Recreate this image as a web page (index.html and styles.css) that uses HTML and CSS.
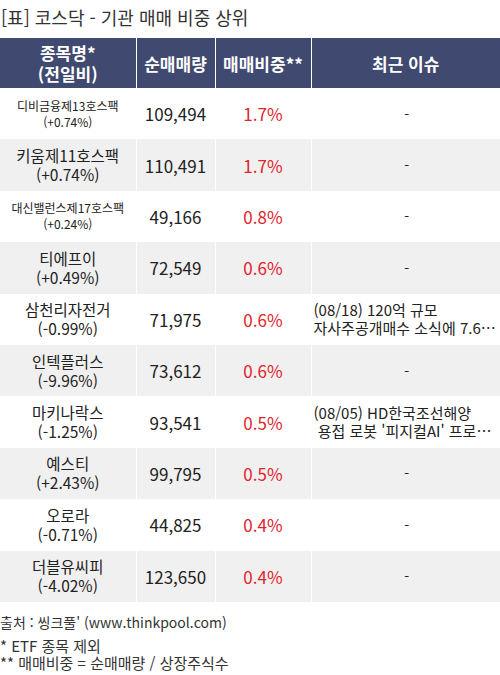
FILE: index.html
```html
<!DOCTYPE html>
<html lang="ko">
<head>
  <meta charset="UTF-8" />
  <title>코스닥 기관 매매 비중 상위</title>
  <link rel="stylesheet" href="styles.css">
</head>
<body>
  <h1 class="title">[표] 코스닥 - 기관 매매 비중 상위</h1>
  <table class="rank-table">
    <colgroup>
      <col class="col-name" />
      <col class="col-vol" />
      <col class="col-ratio" />
      <col class="col-issue" />
    </colgroup>
    <thead>
      <tr>
        <th>종목명*<br>(전일비)</th>
        <th>순매매량</th>
        <th>매매비중**</th>
        <th>최근 이슈</th>
      </tr>
    </thead>
    <tbody>
      <tr>
        <td class="name small">디비금융제13호스팩<br>(+0.74%)</td>
        <td class="num">109,494</td>
        <td class="ratio">1.7%</td>
        <td class="issue empty">-</td>
      </tr>
      <tr>
        <td class="name">키움제11호스팩<br>(+0.74%)</td>
        <td class="num">110,491</td>
        <td class="ratio">1.7%</td>
        <td class="issue empty">-</td>
      </tr>
      <tr>
        <td class="name small">대신밸런스제17호스팩<br>(+0.24%)</td>
        <td class="num">49,166</td>
        <td class="ratio">0.8%</td>
        <td class="issue empty">-</td>
      </tr>
      <tr>
        <td class="name">티에프이<br>(+0.49%)</td>
        <td class="num">72,549</td>
        <td class="ratio">0.6%</td>
        <td class="issue empty">-</td>
      </tr>
      <tr>
        <td class="name">삼천리자전거<br>(-0.99%)</td>
        <td class="num">71,975</td>
        <td class="ratio">0.6%</td>
        <td class="issue"><span class="line">(08/18) 120억 규모</span><span class="line">자사주공개매수 소식에 7.6% 급등</span></td>
      </tr>
      <tr>
        <td class="name">인텍플러스<br>(-9.96%)</td>
        <td class="num">73,612</td>
        <td class="ratio">0.6%</td>
        <td class="issue empty">-</td>
      </tr>
      <tr>
        <td class="name">마키나락스<br>(-1.25%)</td>
        <td class="num">93,541</td>
        <td class="ratio">0.5%</td>
        <td class="issue"><span class="line">(08/05) HD한국조선해양</span><span class="line">&nbsp;용접 로봇 '피지컬AI' 프로젝트</span></td>
      </tr>
      <tr>
        <td class="name">예스티<br>(+2.43%)</td>
        <td class="num">99,795</td>
        <td class="ratio">0.5%</td>
        <td class="issue empty">-</td>
      </tr>
      <tr>
        <td class="name">오로라<br>(-0.71%)</td>
        <td class="num">44,825</td>
        <td class="ratio">0.4%</td>
        <td class="issue empty">-</td>
      </tr>
      <tr>
        <td class="name">더블유씨피<br>(-4.02%)</td>
        <td class="num">123,650</td>
        <td class="ratio">0.4%</td>
        <td class="issue empty">-</td>
      </tr>
    </tbody>
  </table>
  <p class="source">출처 : 씽크풀' (www.thinkpool.com)</p>
  <p class="note">* ETF 종목 제외<br>** 매매비중 = 순매매량 / 상장주식수</p>
</body>
</html>
```

FILE: styles.css
```css
body {
  margin: 0;
  background-color: #ffffff;
  font-family: "Noto Sans CJK KR", "Noto Sans", sans-serif;
  color: #222222;
}

.title {
  margin: 0;
  padding: 5px 0 0 1px;
  height: 33px;
  font-size: 18px;
  font-weight: normal;
  line-height: 24px;
  color: #333333;
  white-space: nowrap;
}

.rank-table {
  width: 500px;
  border-collapse: collapse;
  table-layout: fixed;
}

.col-name { width: 136px; }
.col-vol { width: 79px; }
.col-ratio { width: 96px; }
.col-issue { width: 189px; }

.rank-table th,
.rank-table td {
  box-sizing: border-box;
  border-left: 1px solid #ffffff;
  border-right: 1px solid #ffffff;
  padding: 0;
  text-align: center;
  vertical-align: middle;
  overflow: hidden;
}

.rank-table th:first-child,
.rank-table td:first-child {
  border-left: none;
}

.rank-table th:last-child,
.rank-table td:last-child {
  border-right: none;
}

.rank-table th {
  height: 50px;
  background-color: #404a70;
  color: #ffffff;
  font-size: 17px;
  font-weight: bold;
  line-height: 21px;
}

.rank-table td {
  height: 51.4px;
  font-size: 15px;
  line-height: 19px;
}

.rank-table tbody tr:nth-child(even) td {
  background-color: #f0f0f0;
}

.rank-table .name {
  font-size: 15.5px;
}

.rank-table .name.small {
  font-size: 12px;
  line-height: 16px;
}

.rank-table .num {
  font-size: 17px;
}

.rank-table .ratio {
  font-size: 17px;
  color: #e0242b;
}

.rank-table .issue {
  font-size: 15px;
  line-height: 18px;
  text-align: left;
}

.issue .line {
  display: block;
  padding-left: 2px;
  white-space: nowrap;
  overflow: hidden;
  text-overflow: ellipsis;
}

.rank-table .issue.empty {
  text-align: center;
  font-size: 14px;
  padding-left: 2px;
}

.source {
  margin: 10px 0 0 0;
  font-size: 14px;
  line-height: 20px;
  color: #333333;
}

.note {
  margin: 5px 0 0 0;
  font-size: 15px;
  line-height: 17px;
  color: #333333;
}
```
